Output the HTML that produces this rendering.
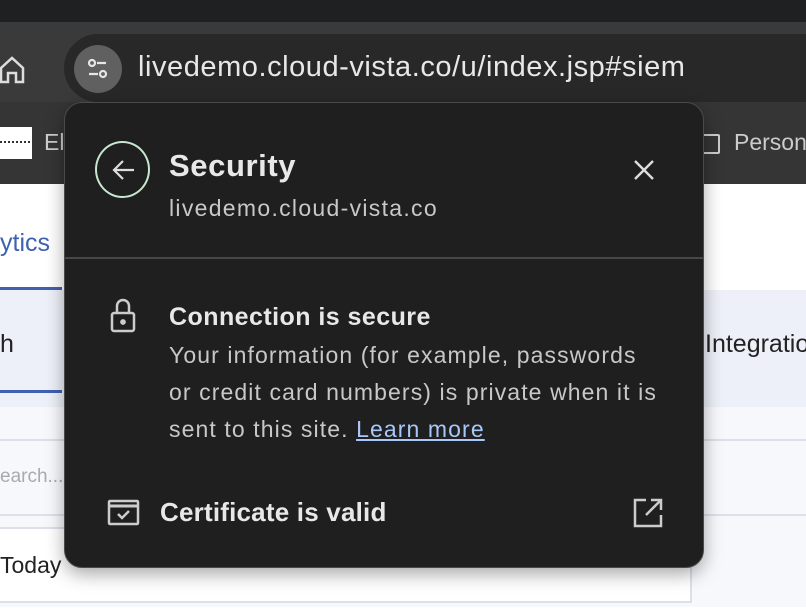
<!DOCTYPE html>
<html><head><style>
body{margin:0;width:806px;height:608px;overflow:hidden;position:relative;background:#fff;font-family:"Liberation Sans",sans-serif}
.a{position:absolute;white-space:nowrap}
</style></head><body>
<div class="a" style="left:0;top:0;width:806px;height:22px;background:#1f2021"></div>
<div class="a" style="left:0;top:22px;width:806px;height:80px;background:#3a3a3a"></div>
<div class="a" style="left:0;top:102px;width:806px;height:82px;background:#353535"></div>
<div class="a" style="left:64px;top:34px;width:800px;height:68px;border-radius:34px;background:#282828"></div>
<svg class="a" style="left:0;top:54px" width="26" height="30" viewBox="0 0 26 30"><path d="M1 28V14L12 4L23 14V28H16V19H8V28Z" fill="none" stroke="#ddd" stroke-width="2.5"/></svg>
<div class="a" style="left:74px;top:45px;width:48px;height:48px;border-radius:50%;background:#606060"></div>
<svg class="a" style="left:86px;top:57px" width="24" height="24" viewBox="0 0 24 24" fill="none" stroke="#e6e6e6" stroke-width="2.2"><circle cx="6" cy="6" r="3"/><path d="M11 6H20M3 17H12"/><circle cx="17" cy="17" r="3"/></svg>
<div class="a" style="left:138px;top:51px;font-size:29px;letter-spacing:0.55px;color:#e8e8e8">livedemo.cloud-vista.co/u/index.jsp#siem</div>
<div class="a" style="left:0;top:127px;width:32px;height:32px;background:#fff"></div>
<div class="a" style="left:0;top:141px;width:30px;border-top:2px dotted #333"></div>
<div class="a" style="left:44px;top:129px;font-size:23px;color:#ccc">El</div>
<div class="a" style="left:702px;top:134px;width:14px;height:16px;border:2px solid #ccc;border-radius:2px"></div>
<div class="a" style="left:734px;top:129px;font-size:23px;color:#ccc">Person</div>
<div class="a" style="left:0;top:229px;font-size:25px;color:#3f62b0">ytics</div>
<div class="a" style="left:0;top:287px;width:62px;height:3px;background:#4060b0"></div>
<div class="a" style="left:0;top:290px;width:806px;height:117px;background:#eef0f9"></div>
<div class="a" style="left:0;top:330px;font-size:25px;color:#222">h</div>
<div class="a" style="left:705px;top:330px;font-size:25px;color:#222">Integration</div>
<div class="a" style="left:0;top:390px;width:62px;height:3px;background:#4060b0"></div>
<div class="a" style="left:0;top:407px;width:806px;height:200px;background:#f7f8fc"></div>
<div class="a" style="left:0;top:439px;width:806px;height:2px;background:#dde0ea"></div>
<div class="a" style="left:0;top:514px;width:806px;height:2px;background:#dde0ea"></div>
<div class="a" style="left:0;top:466px;font-size:19px;color:#aaa">earch...</div>
<div class="a" style="left:-2px;top:527px;width:690px;height:72px;border:2px solid #dde0ea;background:#fff"></div>
<div class="a" style="left:0;top:552px;font-size:23px;color:#222">Today</div>
<div class="a" style="left:64px;top:102px;width:638px;height:464px;background:#1f1f1f;border:1.5px solid #4a4a4a;border-radius:18px;box-shadow:0 6px 18px rgba(0,0,0,.35)"></div>
<div class="a" style="left:95px;top:141px;width:55px;height:57px;border:2.5px solid #c9e6d0;border-radius:50%;box-sizing:border-box"></div>
<svg class="a" style="left:110px;top:156px" width="28" height="28" viewBox="0 0 28 28" fill="none" stroke="#ddd" stroke-width="2.2"><path d="M24 14H5M13 5L4 14L13 23"/></svg>
<div class="a" style="left:169px;top:148px;font-size:31px;letter-spacing:0.6px;font-weight:bold;color:#e8e8e8">Security</div>
<div class="a" style="left:169px;top:195px;font-size:23px;letter-spacing:1.3px;color:#c8c8c8">livedemo.cloud-vista.co</div>
<svg class="a" style="left:633px;top:159px" width="22" height="22" viewBox="0 0 22 22" stroke="#ddd" stroke-width="2.4"><path d="M2 2L20 20M20 2L2 20"/></svg>
<div class="a" style="left:65px;top:257px;width:638px;height:2px;background:#474747"></div>
<svg class="a" style="left:110px;top:298px" width="28" height="36" viewBox="0 0 28 36" fill="none" stroke="#ccc" stroke-width="2.5"><rect x="2" y="15" width="22" height="18" rx="2"/><path d="M7 15V8a6 6 0 0 1 12 0V15"/><circle cx="13" cy="24" r="1.6" fill="#ccc"/></svg>
<div class="a" style="left:169px;top:303px;font-size:25px;letter-spacing:0.45px;font-weight:bold;color:#e8e8e8">Connection is secure</div>
<div class="a" style="left:169px;top:337px;font-size:23px;letter-spacing:1.1px;line-height:37px;color:#c8c8c8">Your information (for example, passwords<br>or credit card numbers) is private when it is<br>sent to this site. <span style="color:#a8c7fa;text-decoration:underline">Learn more</span></div>
<svg class="a" style="left:107px;top:499px" width="34" height="28" viewBox="0 0 34 28" fill="none" stroke="#ccc" stroke-width="2.5"><rect x="2" y="2" width="29" height="23" rx="1"/><path d="M2 7H31" stroke-width="3"/><path d="M11 15L15 19L22 12"/></svg>
<div class="a" style="left:160px;top:497px;font-size:26px;letter-spacing:0.2px;font-weight:bold;color:#e8e8e8">Certificate is valid</div>
<svg class="a" style="left:633px;top:498px" width="30" height="30" viewBox="0 0 30 30" fill="none" stroke="#ccc" stroke-width="2.5"><path d="M13 2H2V28H28V17M18 2H28V12M28 2L13 17"/></svg>
</body></html>
